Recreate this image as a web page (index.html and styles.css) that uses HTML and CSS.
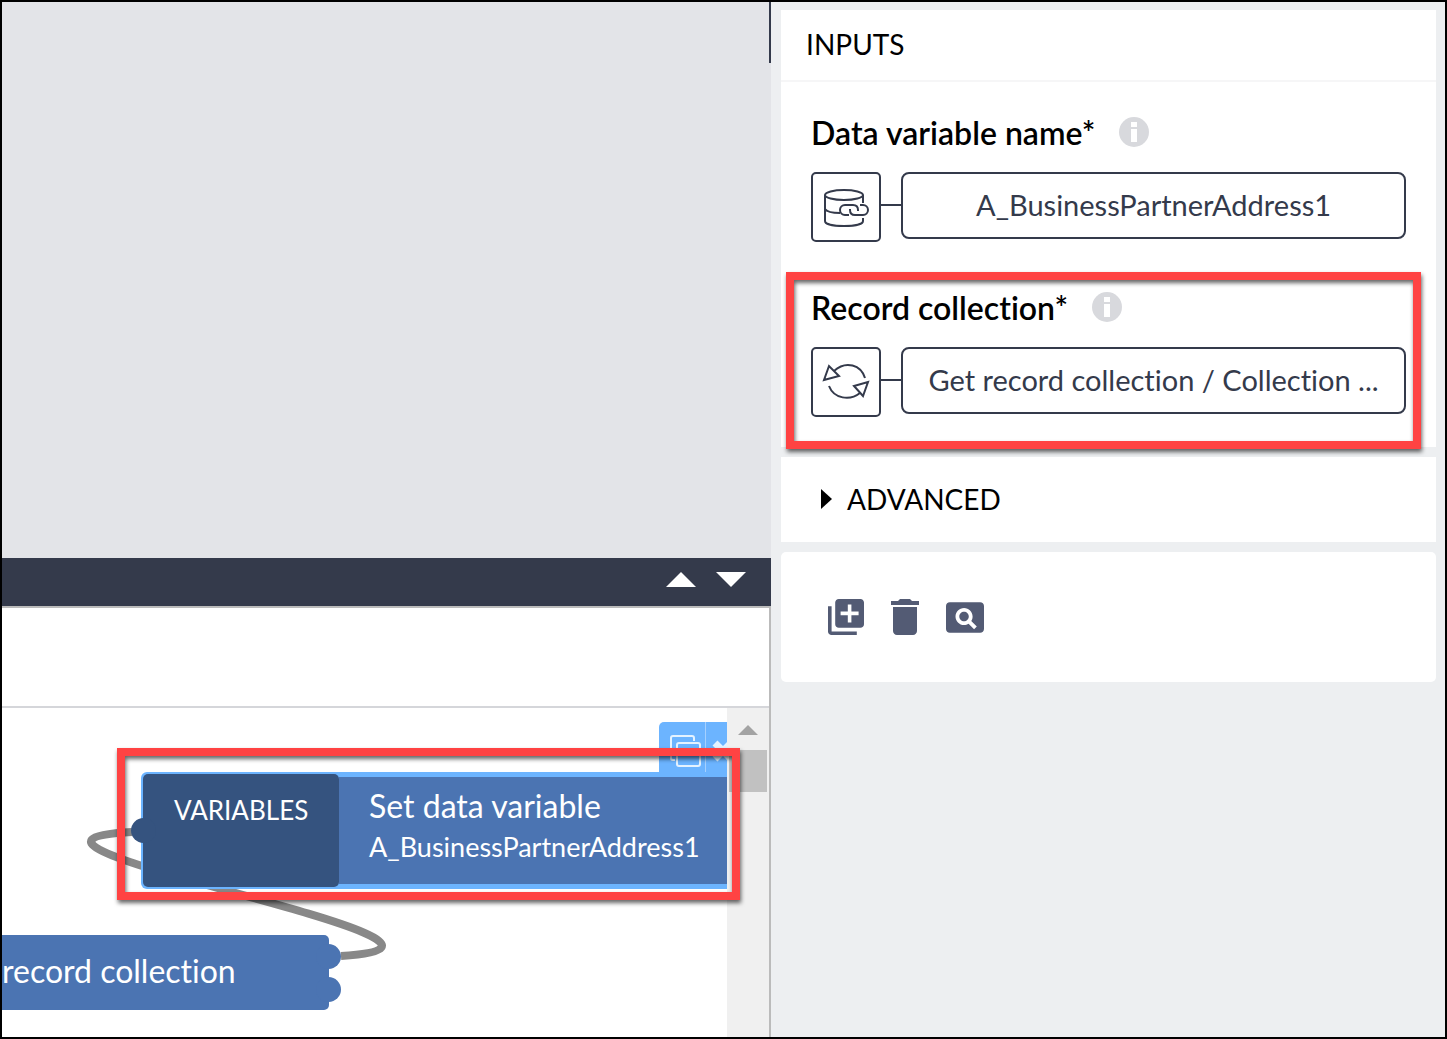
FILE: index.html
```html
<!DOCTYPE html>
<html lang="en">
<head>
<meta charset="utf-8">
<title>Set data variable</title>
<link rel="stylesheet" href="styles.css">
</head>
<body>
<div class="app">
  <main class="left">
    <div class="stage"></div>
    <div class="logic-bar">
      <button class="plain" aria-label="Expand"><svg width="30" height="15" viewBox="0 0 30 15"><path d="M0 15 15 0l15 15z" fill="#fff"/></svg></button>
      <button class="plain" aria-label="Collapse"><svg width="30" height="15" viewBox="0 0 30 15"><path d="M0 0h30L15 15z" fill="#fff"/></svg></button>
    </div>
    <div class="logic">
      <div class="logic-head"></div>
      <div class="workspace">
        <div class="canvas">
          <svg class="wire" width="420" height="329" viewBox="0 0 420 329"><path d="M339 248C539 236-70 134 130 124" fill="none" stroke="#888" stroke-width="8"/></svg>
          <div class="node-tools">
            <button class="plain" aria-label="Duplicate"><svg width="32" height="32" viewBox="0 0 32 32" fill="none" stroke="#e4f2ff" stroke-width="2"><path d="M6 25H4a2 2 0 0 1-2-2V3a2 2 0 0 1 2-2h19a2 2 0 0 1 2 2v3"/><rect x="8" y="8" width="23" height="23" rx="2"/></svg></button>
            <button class="plain remove" aria-label="Remove"><svg width="22" height="22" viewBox="0 0 22 22"><path d="m3 3 16 16M19 3 3 19" stroke="#e4f2ff" stroke-width="7"/></svg></button>
          </div>
          <div class="node selected">
            <span class="port port-in"></span>
            <div class="node-kind">VARIABLES</div>
            <div class="node-body">
              <div class="node-title">Set data variable</div>
              <div class="node-sub">A_BusinessPartnerAddress1</div>
            </div>
          </div>
          <div class="node source">
            <div class="node-title">record collection</div>
            <span class="port port-a"></span>
            <span class="port port-b"></span>
          </div>
        </div>
        <div class="scrollbar">
          <svg width="20" height="10" viewBox="0 0 20 10"><path d="M0 10 10 0l10 10z" fill="#a3a3a3"/></svg>
          <div class="thumb"></div>
        </div>
        <div class="marker marker-node"></div>
      </div>
    </div>
  </main>
  <aside class="panel">
    <section class="card">
      <h2 class="card-head">INPUTS</h2>
      <div class="fields">
        <div class="field">
          <div class="label-row">
            <label for="var-name">Data variable name*</label>
            <svg width="30" height="30" viewBox="0 0 30 30"><circle cx="15" cy="15" r="15" fill="#d8d9dd"/><path d="M12 5h6v5h-6zM12 12h6v13h-6z" fill="#fff"/></svg>
          </div>
          <div class="binding">
            <button class="type" aria-label="Data variable binding"><svg width="48" height="42" viewBox="0 0 48 42" fill="none" stroke="#343a4b" stroke-width="2"><ellipse cx="22" cy="9" rx="19" ry="5"/><path d="M3 9v26c0 3 8 5 19 5s19-2 19-5v-3M41 9v8M3 23c2 3 8 4 15 4"/><path d="M27 29h-4a5 5 0 0 1 0-10h8c3 0 5 2 5 5v1M38 19h3a5 5 0 0 1 0 10h-8c-3 0-5-2-5-5v-1"/></svg></button>
            <span class="link"></span>
            <button class="value" id="var-name">A_BusinessPartnerAddress1</button>
          </div>
        </div>
        <div class="field">
          <div class="label-row">
            <label for="record-col">Record collection*</label>
            <svg width="30" height="30" viewBox="0 0 30 30"><circle cx="15" cy="15" r="15" fill="#d8d9dd"/><path d="M12 5h6v5h-6zM12 12h6v13h-6z" fill="#fff"/></svg>
          </div>
          <div class="binding">
            <button class="type" aria-label="Output value binding"><svg width="48" height="40" viewBox="0 0 48 40" fill="none" stroke="#343a4b" stroke-width="2"><path d="M12 9C24-2 39 3 43 16M7 24c5 13 21 15 31 7M7 4 2 18l15-4zM32 24l14-4-5 14z"/></svg></button>
            <span class="link"></span>
            <button class="value" id="record-col">Get record collection / Collection ...</button>
          </div>
          <div class="marker marker-field"></div>
        </div>
      </div>
    </section>
    <button class="card advanced"><svg width="11" height="20" viewBox="0 0 11 20"><path d="M0 0 11 10 0 20z"/></svg>ADVANCED</button>
    <section class="card actions">
      <button class="plain" aria-label="Duplicate"><svg width="36" height="36" viewBox="2 2 20 20"><path d="M4 6H2v14c0 1.100.9 2 2 2h14v-2H4V6zm16-4H8c-1.100 0-2 .9-2 2v12c0 1.100.9 2 2 2h12c1.100 0 2-.9 2-2V4c0-1.100-.9-2-2-2zm-1 9h-4v4h-2v-4H9V9h4V5h2v4h4v2z"/></svg></button>
      <button class="plain" aria-label="Delete"><svg width="28" height="36" viewBox="5 3 14 18"><path d="M6 19c0 1.100.9 2 2 2h8c1.100 0 2-.9 2-2V7H6v12zM19 4h-3.500l-1-1h-5l-1 1H5v2h14V4z"/></svg></button>
      <button class="plain" aria-label="Inspect"><svg width="38" height="31" viewBox="2 4 20 16"><path d="M11.500 9C10.120 9 9 10.120 9 11.500s1.120 2.500 2.500 2.500 2.500-1.120 2.500-2.500S12.880 9 11.500 9zM20 4H4c-1.100 0-2 .9-2 2v12c0 1.100.9 2 2 2h16c1.100 0 2-.9 2-2V6c0-1.100-.9-2-2-2zm-3.210 14.210l-2.910-2.910c-.69.44-1.510.7-2.390.7C9.010 16 7 13.990 7 11.500S9.010 7 11.500 7 16 9.010 16 11.500c0 .88-.26 1.690-.7 2.390l2.910 2.900-1.420 1.420z"/></svg></button>
    </section>
  </aside>
</div>
</body>
</html>
```

FILE: styles.css
```css
* { box-sizing: border-box; }
body {
  margin: 0;
  font-family: Lato, "Open Sans", sans-serif;
  font-variant-ligatures: none;
  color: #000;
}
button { font: inherit; font-variant-ligatures: none; color: inherit; cursor: pointer; }
svg { display: block; flex: none; }
.plain { padding: 0; border: 0; background: none; }

.app {
  display: grid;
  grid-template-columns: 53.3% minmax(0, 1fr);
  min-height: 100vh;
  border: 2px solid #000;
  background: #edeff1;
}

.left { display: flex; flex-direction: column; }
.stage {
  flex: 1;
  background: linear-gradient(#343a4b, #343a4b) right top / 2px 61px no-repeat #e3e4e8;
}
.logic-bar {
  display: flex;
  justify-content: flex-end;
  align-items: center;
  gap: 20px;
  height: 48px;
  padding: 0 25px 6px;
  background: #343a4b;
}
.logic { border: solid #bbb; border-width: 2px 2px 0 0; background: #fff; }
.logic-head { height: 100px; border-bottom: 2px solid #d5d6da; }
.workspace { position: relative; display: flex; height: 329px; }
.canvas { position: relative; flex: 1; overflow: hidden; }
.scrollbar {
  display: flex;
  flex-direction: column;
  align-items: center;
  gap: 15px;
  width: 42px;
  padding: 17px 2px 0;
  background: #f0f0f0;
}
.thumb { align-self: stretch; height: 42px; background: #c1c1c1; }

.wire { position: absolute; left: 0; top: 0; }
.node { position: absolute; display: flex; color: #fff; }
.selected {
  left: 139px;
  right: -20px;
  top: 64px;
  height: 117px;
  padding: 2px;
  border-radius: 6px;
  background: #6cb4ff;
}
.node-kind {
  width: 196px;
  padding: 20px 0 0 31px;
  border-radius: 5px;
  background: #35537f;
  font-size: 26px;
  line-height: 32px;
}
.node-body { flex: 1; margin: 3px 0; padding: 8px 30px; background: #4b74b2; white-space: nowrap; }
.node-title { font-size: 32px; line-height: 41px; }
.node-sub { font-size: 27px; line-height: 41px; }
.source {
  left: 0;
  top: 227px;
  width: 327px;
  height: 75px;
  padding: 15px 0;
  border-radius: 0 5px 5px 0;
  background: #4b74b2;
  white-space: nowrap;
}
.port { position: absolute; width: 25px; height: 25px; border-radius: 50%; background: #4b74b2; }
.port-in { left: -10px; top: 46px; background: #35537f; }
.port-a { right: -12px; top: 9px; }
.port-b { right: -12px; top: 42px; }
.node-tools {
  position: absolute;
  right: 0;
  top: 14px;
  display: flex;
  width: 68px;
  height: 52px;
  padding: 6px 0 0 10px;
  border-radius: 5px 0 0 0;
  background: #6cb4ff;
  overflow: hidden;
}
.remove { margin: -6px 0 0 4px; padding: 6px 6px 0; border-left: 1px solid #a5d0ff; }

.marker {
  position: absolute;
  border: 8px solid #ff4343;
  filter: drop-shadow(1px 3px 2px rgba(0, 0, 0, .6));
  pointer-events: none;
}
.marker-node { left: 115px; right: 29px; top: 40px; height: 152px; }
.marker-field { left: -25px; right: -15px; top: -19px; bottom: -32px; }

.panel { display: flex; flex-direction: column; gap: 10px; padding: 8px 9px 8px 10px; }
.card { background: #fff; }
.card-head {
  margin: 0;
  padding: 17px 25px 19px;
  border-bottom: 2px solid #f6f6f7;
  font-size: 28px;
  font-weight: 400;
  line-height: 34px;
}
.fields { display: flex; flex-direction: column; gap: 49px; padding: 34px 30px 30px; }
.field { position: relative; }
.label-row {
  display: flex;
  align-items: center;
  gap: 24px;
  height: 32px;
  margin-bottom: 24px;
  font-size: 32px;
  font-weight: 600;
}
.binding { display: flex; }
.type {
  display: flex;
  align-items: center;
  justify-content: center;
  width: 70px;
  height: 70px;
  padding: 0;
  border: 2px solid #343a4b;
  border-radius: 5px;
  background: #fff;
}
.link { width: 20px; height: 2px; margin-top: 32px; background: #343a4b; }
.value {
  flex: 1;
  min-width: 0;
  height: 67px;
  padding: 0 20px 2px;
  border: 2px solid #343a4b;
  border-radius: 8px;
  background: #fff;
  color: #343a4b;
  font-size: 29px;
  text-overflow: ellipsis;
  white-space: nowrap;
  overflow: hidden;
}
.advanced {
  display: flex;
  align-items: center;
  gap: 15px;
  height: 85px;
  padding: 0 40px 2px;
  border: 0;
  font-size: 28px;
}
.actions {
  display: flex;
  align-items: center;
  gap: 27px;
  height: 130px;
  padding: 0 47px;
  border-radius: 5px;
  fill: #535b74;
}
```
